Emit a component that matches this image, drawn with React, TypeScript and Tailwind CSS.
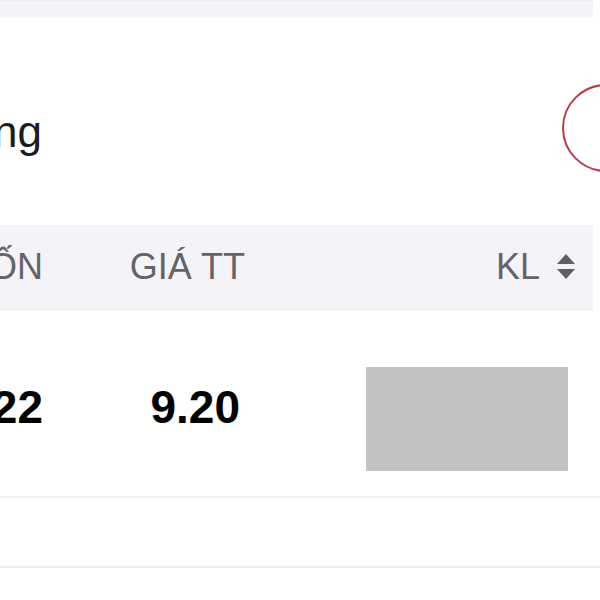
import { memo } from "react";

const font = "font-['Liberation_Sans','Helvetica_Neue',Arial,sans-serif]";

// up / down sort arrows next to the column title
const SortIcon = () => (
  <svg width="18" height="26" viewBox="0 0 18 26" className="ml-[17px]">
    <path d="M9 0 L18 10 H0 Z" fill="#5f5f66" />
    <path d="M0 15 H18 L9 25 Z" fill="#5f5f66" />
  </svg>
);

const App = () => {
  return (
    <div className={`w-[600px] h-[600px] overflow-hidden bg-white ${font}`}>
      {/* strip left from the previous block */}
      <div className="h-[18px] w-[593px] bg-[#f4f4f7] border-t border-[#ececf0]" />

      {/* option row */}
      <div className="h-[207px] flex items-start">
        <div className="-ml-[400px] w-[442px] shrink-0 text-right mt-[88px] text-[44px] leading-[52px] text-[#1c1c1e] whitespace-nowrap">
          Lệnh thường
        </div>
        <div className="ml-[520px] mt-[66px] w-[88px] h-[88px] shrink-0 rounded-full border-2 border-[#b63e4c] bg-white" />
      </div>

      {/* column titles */}
      <div className="h-[85px] w-[593px] bg-[#f4f4f8] border-b border-[#ebebee] flex items-center text-[36px] text-[#636369] whitespace-nowrap">
        <div className="-ml-[300px] w-[343px] shrink-0 text-right">GIÁ VỐN</div>
        <div className="w-[202px] shrink-0 text-right">GIÁ TT</div>
        <div className="flex-1 flex items-center justify-end pr-[18px]">
          <span>KL</span>
          <SortIcon />
        </div>
      </div>

      {/* holding */}
      <div className="h-[188px] border-b-2 border-[#efefef] flex items-center whitespace-nowrap">
        <div className="-ml-[300px] w-[343px] shrink-0 text-right text-[46px] font-bold text-black mt-[8px]">10.22</div>
        <div className="w-[197px] shrink-0 text-right text-[46px] font-bold text-black mt-[8px]">9.20</div>
        <div className="ml-[126px] w-[202px] h-[104px] shrink-0 bg-[#c2c2c2] mt-[32px]" />
      </div>

      <div className="h-[70px] border-b-2 border-[#ececec]" />
    </div>
  );
};

export default memo(App);
